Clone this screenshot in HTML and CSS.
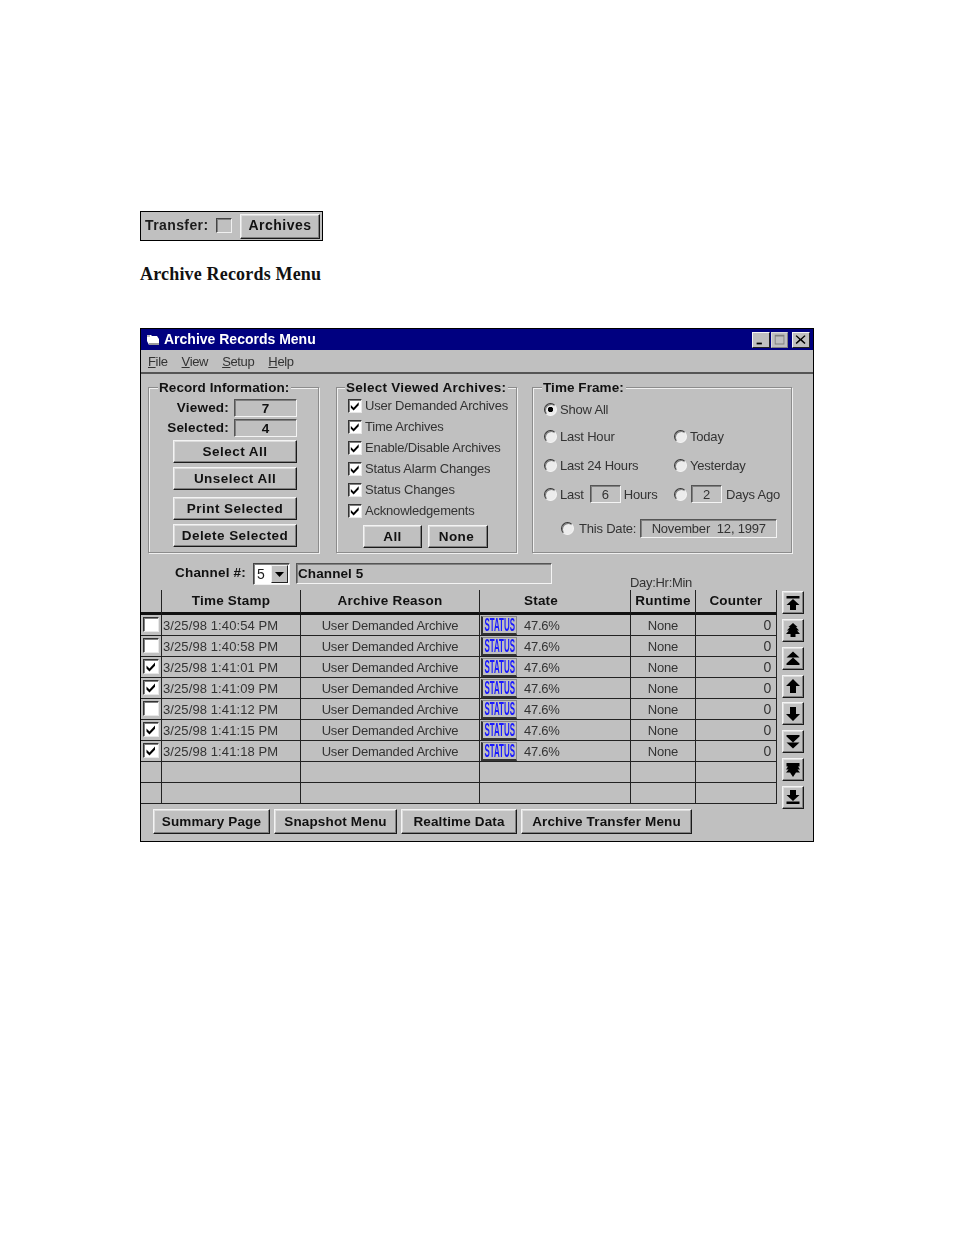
FILE: index.html
```html
<!DOCTYPE html>
<html lang="en">
<head>
<meta charset="utf-8">
<title>Archive Records Menu</title>
<link rel="stylesheet" href="styles.css">
</head>
<body>
<svg class="defs" width="0" height="0" aria-hidden="true">
  <defs>
    <symbol id="chk" viewBox="0 0 13 13"><path d="M2 5.500l3 3L10.500 2.500v3.300L5 11.500 2 8.500z" fill="#000"/></symbol>
  </defs>
</svg>
<div class="toolbar">
  <span class="tb-label">Transfer:</span>
  <span class="tb-box"></span>
  <button class="btn tb-btn">Archives</button>
</div>
<h1 class="doc-title">Archive Records Menu</h1>
<div class="window">
  <div class="titlebar">
    <svg class="app-icon" viewBox="0 0 14 12"><path d="M1 1h4l1 1h5l2 3v6H3L1 7z" fill="#fff"/><path d="M3 11h10V9H3z" fill="#9a9a9a"/><path d="M1 1h3v2H1z" fill="#c0c0c0"/></svg>
    <span class="title-text">Archive Records Menu</span>
    <span class="wbtns">
      <span class="wbtn"><svg viewBox="0 0 18 16"><path d="M4 11h6v2H4z" fill="#000"/></svg></span>
      <span class="wbtn wbtn-max"><svg viewBox="0 0 18 16"><path d="M3 2h11v11H3zM4 4v8h9V4z" fill="#808080" fill-rule="evenodd"/></svg></span>
      <span class="wbtn wbtn-close"><svg viewBox="0 0 18 16"><path d="M4 2.500l4.500 4 4.500-4 1.200 1-4.300 4 4.300 4-1.200 1-4.500-4-4.500 4-1.200-1 4.300-4-4.300-4z" fill="#000"/></svg></span>
    </span>
  </div>
  <div class="menubar">
    <span><u>F</u>ile</span><span><u>V</u>iew</span><span><u>S</u>etup</span><span><u>H</u>elp</span>
  </div>

  <div class="groups">
    <section class="group g-record">
      <h2 class="legend">Record Information:</h2>
      <div class="stat"><span class="stat-l">Viewed:</span><span class="field stat-f">7</span></div>
      <div class="stat"><span class="stat-l">Selected:</span><span class="field stat-f">4</span></div>
      <button class="btn rec-btn b1">Select All</button>
      <button class="btn rec-btn b2">Unselect All</button>
      <button class="btn rec-btn b3">Print Selected</button>
      <button class="btn rec-btn b4">Delete Selected</button>
    </section>

    <section class="group g-arch">
      <h2 class="legend">Select Viewed Archives:</h2>
      <label class="chk-row"><span class="cb"><svg><use href="#chk"/></svg></span>User Demanded Archives</label>
      <label class="chk-row"><span class="cb"><svg><use href="#chk"/></svg></span>Time Archives</label>
      <label class="chk-row"><span class="cb"><svg><use href="#chk"/></svg></span>Enable/Disable Archives</label>
      <label class="chk-row"><span class="cb"><svg><use href="#chk"/></svg></span>Status Alarm Changes</label>
      <label class="chk-row"><span class="cb"><svg><use href="#chk"/></svg></span>Status Changes</label>
      <label class="chk-row"><span class="cb"><svg><use href="#chk"/></svg></span>Acknowledgements</label>
      <div class="arch-btns">
        <button class="btn all-btn">All</button>
        <button class="btn none-btn">None</button>
      </div>
    </section>

    <section class="group g-time">
      <h2 class="legend">Time Frame:</h2>
      <div class="t-row"><span class="t-cell"><span class="rb rb-on"></span>Show All</span></div>
      <div class="t-row t-m1"><span class="t-cell"><span class="rb"></span>Last Hour</span><span class="t-cell"><span class="rb"></span>Today</span></div>
      <div class="t-row t-m2"><span class="t-cell"><span class="rb"></span>Last 24 Hours</span><span class="t-cell"><span class="rb"></span>Yesterday</span></div>
      <div class="t-row t-m2"><span class="t-cell"><span class="rb"></span>Last<span class="field t-f">6</span>Hours</span><span class="t-cell"><span class="rb"></span><span class="field t-f t-f2">2</span>Days Ago</span></div>
      <div class="t-row t-m3"><span class="rb"></span>This Date:<span class="field date-f">November&nbsp; 12, 1997</span></div>
    </section>
  </div>

  <div class="channel">
    <span class="ch-label">Channel #:</span>
    <span class="ch-select"><span class="ch-val">5</span><span class="ch-arrow"><svg viewBox="0 0 9 5"><path d="M0 0h9L4.500 5z" fill="#000"/></svg></span></span>
    <span class="field ch-name">Channel 5</span>
    <span class="ch-day">Day:Hr:Min</span>
  </div>

  <div class="table-area">
    <table class="grid">
      <colgroup><col class="c1"><col class="c2"><col class="c3"><col class="c4"><col class="c5"><col class="c6"></colgroup>
      <thead>
        <tr><th></th><th>Time Stamp</th><th>Archive Reason</th><th class="th-state">State</th><th>Runtime</th><th>Counter</th></tr>
      </thead>
      <tbody>
        <tr><td><span class="cb cb-t"></span></td><td class="ts">3/25/98 1:40:54 PM</td><td class="ctr">User Demanded Archive</td><td><span class="state"><span class="status"><span class="status-t">STATUS</span></span>47.6%</span></td><td class="ctr">None</td><td class="num">0</td></tr>
        <tr><td><span class="cb cb-t"></span></td><td class="ts">3/25/98 1:40:58 PM</td><td class="ctr">User Demanded Archive</td><td><span class="state"><span class="status"><span class="status-t">STATUS</span></span>47.6%</span></td><td class="ctr">None</td><td class="num">0</td></tr>
        <tr><td><span class="cb cb-t"><svg><use href="#chk"/></svg></span></td><td class="ts">3/25/98 1:41:01 PM</td><td class="ctr">User Demanded Archive</td><td><span class="state"><span class="status"><span class="status-t">STATUS</span></span>47.6%</span></td><td class="ctr">None</td><td class="num">0</td></tr>
        <tr><td><span class="cb cb-t"><svg><use href="#chk"/></svg></span></td><td class="ts">3/25/98 1:41:09 PM</td><td class="ctr">User Demanded Archive</td><td><span class="state"><span class="status"><span class="status-t">STATUS</span></span>47.6%</span></td><td class="ctr">None</td><td class="num">0</td></tr>
        <tr><td><span class="cb cb-t"></span></td><td class="ts">3/25/98 1:41:12 PM</td><td class="ctr">User Demanded Archive</td><td><span class="state"><span class="status"><span class="status-t">STATUS</span></span>47.6%</span></td><td class="ctr">None</td><td class="num">0</td></tr>
        <tr><td><span class="cb cb-t"><svg><use href="#chk"/></svg></span></td><td class="ts">3/25/98 1:41:15 PM</td><td class="ctr">User Demanded Archive</td><td><span class="state"><span class="status"><span class="status-t">STATUS</span></span>47.6%</span></td><td class="ctr">None</td><td class="num">0</td></tr>
        <tr><td><span class="cb cb-t"><svg><use href="#chk"/></svg></span></td><td class="ts">3/25/98 1:41:18 PM</td><td class="ctr">User Demanded Archive</td><td><span class="state"><span class="status"><span class="status-t">STATUS</span></span>47.6%</span></td><td class="ctr">None</td><td class="num">0</td></tr>
        <tr><td></td><td></td><td></td><td></td><td></td><td></td></tr>
        <tr><td></td><td></td><td></td><td></td><td></td><td></td></tr>
      </tbody>
    </table>
    <div class="nav">
      <button class="btn nav-btn"><svg viewBox="0 0 16 16"><path d="M1.500 1h13v2.500h-13zM8 4l6.500 6h-3.500v5H5v-5H1.500z"/></svg></button>
      <button class="btn nav-btn"><svg viewBox="0 0 16 16"><path d="M8 1l4.500 4H11l3 3.500h-2l3 3.500H10.500v3h-5v-3H1l3-3.500H2l3-3.500H3.500z"/></svg></button>
      <button class="btn nav-btn"><svg viewBox="0 0 16 16"><path d="M8 1.500l6.500 6h-13zM8 7.500l6.500 6v1.500h-13v-1.500z"/></svg></button>
      <button class="btn nav-btn"><svg viewBox="0 0 16 16"><path d="M8 1l7 7H11v7H5V8H1z"/></svg></button>
      <button class="btn nav-btn"><svg viewBox="0 0 16 16"><path d="M8 15L1 8H5V1h6v7h4z"/></svg></button>
      <button class="btn nav-btn"><svg viewBox="0 0 16 16"><path d="M1.500 1h13v1.500L8 8.500 1.500 2.500zM1.500 8.500h13L8 14.500z"/></svg></button>
      <button class="btn nav-btn"><svg viewBox="0 0 16 16"><path d="M1.500 1h13v3.500H13l2 3h-2.500l2.500 3h-4L8 15l-3-4.500H1l2.500-3H1l2-3H1.500z"/></svg></button>
      <button class="btn nav-btn"><svg viewBox="0 0 16 16"><path d="M5 1h6v5h3.500L8 12 1.500 6H5zM1.500 12.500h13V15h-13z"/></svg></button>
    </div>
  </div>

  <div class="bottom">
    <button class="btn bot-btn w1">Summary Page</button>
    <button class="btn bot-btn w2">Snapshot Menu</button>
    <button class="btn bot-btn w3">Realtime Data</button>
    <button class="btn bot-btn w4">Archive Transfer Menu</button>
  </div>
</div>
</body>
</html>
```
FILE: styles.css
```css
* { box-sizing: border-box; }
html, body { margin: 0; background: #fff; }
body {
  padding: 211px 0 0 140px;
  height: 1235px;
  overflow: hidden;
  font-family: "Liberation Sans", Arial, sans-serif;
  font-size: 13px;
  letter-spacing: -0.2px;
  color: #1c1c1c;
}
.defs { position: absolute; }

.btn {
  display: flex;
  align-items: center;
  justify-content: center;
  margin: 0;
  padding: 0 0 1px;
  font: bold 13.5px "Liberation Sans", Arial, sans-serif;
  letter-spacing: 0.45px;
  color: #111;
  background: #c0c0c0;
  border: 1px solid;
  border-color: #f4f4f4 #1a1a1a #1a1a1a #f4f4f4;
  box-shadow: inset -1px -1px #808080, inset 1px 1px #dcdcdc;
  white-space: nowrap;
}

.field {
  display: inline-flex;
  align-items: center;
  justify-content: center;
  background: #c0c0c0;
  border: 1px solid;
  border-color: #555 #f4f4f4 #f4f4f4 #555;
  box-shadow: inset 1px 1px #808080;
}

/* Transfer toolbar */
.toolbar {
  display: flex;
  align-items: center;
  width: 183px;
  height: 30px;
  padding-left: 4px;
  background: #c0c0c0;
  border: 1px solid #000;
  filter: blur(0.35px);
}
.tb-label { width: 71px; padding-bottom: 2px; font-size: 14px; font-weight: bold; letter-spacing: 0.4px; }
.tb-box {
  width: 16px;
  height: 15px;
  margin-bottom: 1px;
  border: 1px solid;
  border-color: #444 #f0f0f0 #f0f0f0 #444;
  box-shadow: inset 1px 1px #808080;
}
.tb-btn { width: 80px; height: 25px; margin-left: 8px; padding-bottom: 2px; font-size: 14px; letter-spacing: 0.5px; }

.doc-title {
  margin: 22px 0 43px;
  font: bold 18px/22px "Liberation Serif", "Times New Roman", serif;
  letter-spacing: 0.18px;
  color: #111;
}

/* Window */
.window {
  width: 674px;
  height: 514px;
  background: #c0c0c0;
  border: 1px solid #000;
  filter: blur(0.35px);
}
.titlebar {
  display: flex;
  align-items: center;
  height: 21px;
  padding: 0 3px 0 5px;
  background: #000080;
  color: #fff;
  font-size: 14px;
  font-weight: bold;
  letter-spacing: 0;
}
.app-icon { width: 14px; height: 12px; margin-right: 4px; }
.title-text { flex: 1; padding-bottom: 2px; }
.wbtns { display: flex; align-items: center; gap: 1px; }
.wbtn {
  display: block;
  width: 18px;
  height: 16px;
  background: #c0c0c0;
  border: 1px solid;
  border-color: #f4f4f4 #222 #222 #f4f4f4;
}
.wbtn svg { display: block; width: 16px; height: 14px; }
.wbtn-max { width: 17px; border-color: #dcdcdc #808080 #808080 #dcdcdc; }
.wbtn-close { margin-left: 3px; }

.menubar {
  display: flex;
  gap: 14px;
  align-items: center;
  height: 24px;
  padding-left: 7px;
  border-bottom: 2px solid #555;
  letter-spacing: -0.35px;
  color: #333;
}

/* Group boxes */
.groups {
  display: flex;
  padding: 13px 0 0 7px;
}
.group {
  position: relative;
  height: 166px;
  border: 1px solid #8c8c8c;
  box-shadow: inset 1px 1px #f0f0f0, 1px 1px #f0f0f0;
}
.legend {
  position: absolute;
  top: -8px;
  left: 9px;
  margin: 0;
  padding: 0 2px 0 1px;
  font-size: 13.5px;
  line-height: 16px;
  font-weight: bold;
  letter-spacing: 0.07px;
  background: #c0c0c0;
  color: #111;
  white-space: nowrap;
}
.g-arch .legend { left: 8px; letter-spacing: 0.25px; }

.g-record { width: 171px; padding: 11px 0 0 24px; }
.stat { display: flex; align-items: center; height: 18px; margin: 0 0 2px -24px; }
.stat-l { width: 80px; padding-bottom: 2px; text-align: right; font-size: 13.5px; font-weight: bold; letter-spacing: 0.2px; color: #111; }
.stat-f { width: 63px; height: 18px; margin-left: 5px; font-size: 13.500px; font-weight: bold; color: #111; }
.rec-btn { width: 124px; height: 23px; }
.b1 { margin-top: 3px; }
.b2 { margin-top: 4px; }
.b3 { margin-top: 7px; }
.b4 { margin-top: 4px; }

.g-arch { width: 181px; margin-left: 17px; padding: 7px 0 0 11px; }
.chk-row { display: flex; align-items: center; height: 21px; color: #333; white-space: nowrap; }
.cb {
  display: block;
  flex: none;
  width: 14px;
  height: 14px;
  margin-right: 3px;
  background: #fff;
  border: 1px solid;
  border-color: #333 #e8e8e8 #e8e8e8 #333;
  box-shadow: inset 1px 1px #808080;
}
.cb svg { display: block; width: 12px; height: 12px; }
.arch-btns { display: flex; gap: 6px; margin: 4px 0 0 15px; }
.all-btn { width: 59px; height: 23px; }
.none-btn { width: 60px; height: 23px; padding-right: 3px; }

.g-time { width: 260px; margin-left: 15px; padding: 12px 0 0 11px; color: #333; }
.t-row { display: flex; align-items: center; height: 18px; white-space: nowrap; }
.t-m1 { margin-top: 9px; }
.t-m2 { margin-top: 11px; }
.t-m3 { margin-top: 16px; padding-left: 17px; }
.t-m3 .rb { margin-right: 5px; }
.t-cell { display: flex; flex: none; align-items: center; width: 130px; }
.rb {
  flex: none;
  width: 13px;
  height: 13px;
  margin-right: 3px;
  border-radius: 50%;
  background: #ececec;
  border: 1px solid;
  border-color: #333 #f4f4f4 #f4f4f4 #333;
  box-shadow: inset 1px 1px #808080;
}
.rb-on { background: radial-gradient(circle, #000 0 2.400px, #ececec 3px); }
.t-f { width: 31px; height: 18px; margin: 0 3px 0 6px; }
.t-f2 { margin: 0 4px 0 1px; }
.date-f { width: 137px; height: 19px; margin-left: 4px; }

/* Channel row */
.channel {
  display: flex;
  align-items: flex-start;
  height: 27px;
  margin-top: 10px;
  padding-left: 34px;
}
.ch-label { width: 78px; padding-top: 2px; font-size: 13.5px; font-weight: bold; letter-spacing: 0.2px; color: #111; }
.ch-select {
  display: flex;
  align-items: center;
  justify-content: space-between;
  width: 37px;
  height: 22px;
  padding: 1px 1px 1px 3px;
  font-size: 14px;
  background: #fff;
  border: 1px solid;
  border-color: #444 #f0f0f0 #f0f0f0 #444;
  box-shadow: inset 1px 1px #808080;
}
.ch-arrow {
  display: flex;
  align-items: center;
  justify-content: center;
  width: 17px;
  height: 18px;
  background: #c0c0c0;
  border: 1px solid;
  border-color: #f0f0f0 #222 #222 #f0f0f0;
}
.ch-arrow svg { width: 9px; height: 5px; }
.ch-name {
  justify-content: flex-start;
  width: 256px;
  height: 21px;
  margin-left: 6px;
  padding: 0 0 1px 1px;
  font-size: 13.5px;
  font-weight: bold;
  letter-spacing: 0.1px;
  color: #111;
}
.ch-day { align-self: flex-end; margin-left: 78px; line-height: 14px; color: #333; letter-spacing: -0.3px; }

/* Table */
.table-area { display: flex; height: 219px; }
.grid {
  width: 636px;
  height: 214px;
  table-layout: fixed;
  border-collapse: separate;
  border-spacing: 0;
}
.c1 { width: 21px; }
.c2 { width: 139px; }
.c3 { width: 179px; }
.c4 { width: 151px; }
.c5 { width: 65px; }
.c6 { width: 81px; }
.grid th {
  height: 25px;
  padding: 0 0 2px;
  font-size: 13.5px;
  font-weight: bold;
  letter-spacing: 0.2px;
  color: #111;
  border-right: 1px solid #222;
  border-bottom: 3px solid #111;
}
.grid .th-state { padding-right: 28px; }
.grid td {
  height: 21px;
  padding: 0 0 0 1px;
  color: #333;
  white-space: nowrap;
  border-right: 1px solid #222;
  border-bottom: 1px solid #222;
}
.grid .ts { letter-spacing: 0.1px; }
.grid .ctr { padding: 0; text-align: center; }
.grid .num { padding: 0 5px 0 0; text-align: right; font-size: 14px; }
.cb-t { width: 16px; height: 15px; margin: 0 0 1px 1px; }
.cb-t svg { width: 14px; height: 13px; }
.state { display: flex; align-items: center; height: 19px; letter-spacing: -0.25px; }
.status {
  display: flex;
  flex: none;
  align-items: center;
  justify-content: center;
  width: 36px;
  height: 19px;
  margin: 0 7px 0 0;
  background: #c0c0c0;
  border-style: solid;
  border-width: 1px 1px 2px 2px;
  border-color: #888 #888 #333 #333;
  overflow: hidden;
}
.status-t {
  flex: none;
  transform: scaleX(0.44);
  font-size: 18px;
  line-height: 16px;
  font-weight: bold;
  color: #1a1aff;
  letter-spacing: 0;
}

.nav {
  display: flex;
  flex-direction: column;
  justify-content: space-between;
  width: 22px;
  height: 218px;
  margin: 1px 0 0 5px;
}
.nav-btn { width: 22px; height: 23px; flex: none; padding: 0; }
.nav-btn svg { width: 16px; height: 16px; fill: #000; }

/* Bottom buttons */
.bottom { display: flex; gap: 4px; padding-left: 12px; }
.bot-btn { height: 25px; letter-spacing: 0.15px; }
.w1 { width: 117px; }
.w2 { width: 123px; }
.w3 { width: 116px; }
.w4 { width: 171px; }
```
